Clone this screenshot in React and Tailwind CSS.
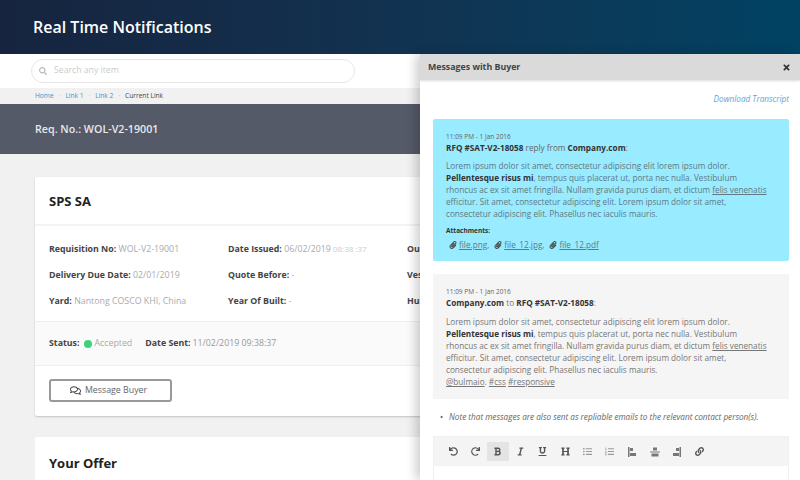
import { FaUndo, FaRedo, FaBold, FaItalic, FaUnderline, FaHeading, FaListUl, FaListOl, FaLink, FaPaperclip, FaSearch, FaTimes, FaRegComments } from 'react-icons/fa';

const font = { fontFamily: '"Open Sans", sans-serif' };

function Crumbs() {
  return (
    <div className="h-4 bg-[#f1f1f1] pl-[35px] flex items-center gap-[5px] text-[6.6px] text-[#3b95d3]">
      <span>Home</span><span className="text-[#bbb]">·</span>
      <span>Link 1</span><span className="text-[#bbb]">·</span>
      <span>Link 2</span><span className="text-[#bbb]">·</span>
      <span className="text-[#444]">Current Link</span>
    </div>
  );
}

function Field({ label, value, extra }) {
  return (
    <div className="whitespace-nowrap text-[8.8px] leading-[26px]">
      <span className="font-bold text-[#444]">{label}</span>{' '}
      <span className="text-[#aaa]">{value}</span>
      {extra && <span className="text-[8px] text-[#ccc]"> {extra}</span>}
    </div>
  );
}

function SummaryCard() {
  return (
    <div className="bg-white w-[730px] shadow-[0_1px_2px_rgba(0,0,0,0.2)] rounded-[2px]">
      <div className="h-[49px] px-[14px] pt-[2px] flex items-center border-b-2 border-[#f3f3f3] text-[13px] font-bold text-[#222]">SPS SA</div>
      <div className="px-[14px] pt-[10px] pb-[7px] grid grid-cols-[179px_179px_1fr] border-b border-[#eee]">
        <Field label="Requisition No:" value="WOL-V2-19001" />
        <Field label="Date Issued:" value="06/02/2019" extra="08:38 :37" />
        <Field label="Outfitter:" value="-" />
        <Field label="Delivery Due Date:" value="02/01/2019" />
        <Field label="Quote Before:" value="-" />
        <Field label="Vessel:" value="-" />
        <Field label="Yard:" value="Nantong COSCO KHI, China" />
        <Field label="Year Of Built:" value="-" />
        <Field label="Hull No:" value="-" />
      </div>
      <div className="h-[44px] px-[14px] pt-[1px] bg-[#fafafa] border-b border-[#eee] flex items-center text-[8.8px] whitespace-nowrap">
        <span className="font-bold text-[#444]">Status:</span>
        <span className="ml-[5px] w-2 h-2 rounded-full bg-[#3ed27d]" />
        <span className="ml-[2px] text-[#aaa]">Accepted</span>
        <span className="ml-[13px] font-bold text-[#444]">Date Sent:</span>
        <span className="ml-[2px] text-[#999]">11/02/2019 09:38:37</span>
      </div>
      <div className="h-[50px] px-[14px] flex items-center">
        <button className="w-[123px] h-[23px] -mt-[2px] pr-[4px] border-2 border-[#999] rounded-[3px] flex items-center justify-center gap-[4px] text-[8.8px] text-[#666]">
          <FaRegComments className="text-[11px] text-[#444]" />
          <span className="pt-[2px]">Message Buyer</span>
        </button>
      </div>
    </div>
  );
}

function AlignIcon({ kind }) {
  return (
    <svg width="10" height="10" viewBox="0 0 10 10" fill="#777">
      {kind === 'left' && <><rect x="1" y="0" width="1.5" height="10" /><rect x="3" y="1" width="3" height="3" /><rect x="3" y="6" width="6" height="3" /></>}
      {kind === 'center' && <><rect x="0" y="4.5" width="10" height="1" /><rect x="3" y="0.5" width="4" height="3" /><rect x="1.5" y="6.5" width="7" height="3" /></>}
      {kind === 'right' && <><rect x="7.5" y="0" width="1.5" height="10" /><rect x="4" y="1" width="3" height="3" /><rect x="1" y="6" width="6" height="3" /></>}
    </svg>
  );
}

function Toolbar() {
  const items = [
    <FaUndo />, <FaRedo />, <FaBold />, <FaItalic />, <FaUnderline />, <FaHeading />,
    <FaListUl className="text-[#999]" />, <FaListOl className="text-[#999]" />,
    <AlignIcon kind="left" />, <AlignIcon kind="center" />, <AlignIcon kind="right" />, <FaLink />,
  ];
  return (
    <div className="h-[29px] bg-[#f4f4f4] px-[8px] flex items-center">
      {items.map((icon, i) => (
        <span key={i} className={`w-[22.4px] h-[19px] flex items-center justify-center text-[9px] text-[#555] ${i === 2 ? 'bg-[#e4e4e4]' : ''}`}>
          {icon}
        </span>
      ))}
    </div>
  );
}

function Lorem() {
  return (
    <>
      Lorem ipsum dolor sit amet, consectetur adipiscing elit lorem ipsum dolor.<br />
      <b className="text-[#333]">Pellentesque risus mi</b>, tempus quis placerat ut, porta nec nulla. Vestibulum<br />
      rhoncus ac ex sit amet fringilla. Nullam gravida purus diam, et dictum <u>felis venenatis</u><br />
      efficitur. Sit amet, consectetur adipiscing elit. Lorem ipsum dolor sit amet,<br />
      consectetur adipiscing elit. Phasellus nec iaculis mauris.
    </>
  );
}

function Attachment({ name }) {
  return (
    <span className="flex items-center gap-[2px]">
      <FaPaperclip className="text-[8px] text-[#444]" />
      <u>{name}</u>
    </span>
  );
}

function Panel() {
  return (
    <aside className="absolute top-[54px] right-0 bottom-0 w-[380px] bg-white shadow-[-4px_0_10px_rgba(0,0,0,0.2)] overflow-hidden">
      <div className="h-[26px] bg-[#dadada] pl-[8px] pr-[9px] pt-[1px] flex items-center justify-between text-[8.8px] font-bold text-[#444] shadow-[0_1px_2px_rgba(0,0,0,0.15)]">
        Messages with Buyer
        <FaTimes className="text-[9px] text-[#333]" />
      </div>
      <div className="px-[13px] pr-[11px]">
        <div className="h-[39px] flex items-center justify-end text-[8.2px] italic text-[#5aa6da]">Download Transcript</div>

        <div className="bg-[#99ebff] rounded-[2px] h-[142px] pt-[13px] px-[13px] text-[8.2px] leading-[12px] text-[#5e7a84] whitespace-nowrap">
          <div className="text-[6.5px] leading-[10px] text-[#666]">11:09 PM - 1 Jan 2016</div>
          <div className="text-[#666]"><b className="text-[#333]">RFQ #SAT-V2-18058</b> reply from <b className="text-[#333]">Company.com</b>:</div>
          <div className="mt-[6px]"><Lorem /></div>
          <div className="mt-[6px] text-[6.5px] leading-[10px] font-bold text-[#333]">Attachments:</div>
          <div className="mt-[2px] pl-[3px] flex items-center gap-[5px] leading-[13px]">
            <Attachment name="file.png" />
            <span className="-ml-[5px]">,</span>
            <Attachment name="file_12.jpg" />
            <span className="-ml-[5px]">,</span>
            <Attachment name="file_12.pdf" />
          </div>
        </div>

        <div className="mt-[13px] bg-[#f5f5f5] h-[125px] pt-[13px] px-[13px] text-[8.2px] leading-[12px] text-[#777] whitespace-nowrap">
          <div className="text-[6.5px] leading-[10px] text-[#666]">11:09 PM - 1 Jan 2016</div>
          <div><b className="text-[#333]">Company.com</b> to <b className="text-[#333]">RFQ #SAT-V2-18058</b>:</div>
          <div className="mt-[7px]"><Lorem /></div>
          <div><u>@bulmaio</u>. <u>#css</u> <u>#responsive</u></div>
        </div>

        <div className="h-[37px] pl-[7px] flex items-center gap-[6px] text-[8.2px] italic text-[#666] whitespace-nowrap">
          <span className="not-italic text-[#555]">•</span>
          Note that messages are also sent as repliable emails to the relevant contact person(s).
        </div>

        <div className="border border-[#f0f0f0]">
          <Toolbar />
          <div className="h-[40px] bg-white" />
        </div>
      </div>
    </aside>
  );
}

export default function App() {
  return (
    <div style={font} className="relative w-[800px] h-[480px] overflow-hidden bg-[#f1f1f1]">
      <header className="h-[54px] bg-gradient-to-r from-[#16243f] to-[#004263] pl-[33px] flex items-center text-[16px] font-semibold text-white">
        Real Time Notifications
      </header>
      <div className="h-[34px] bg-white pl-[31px] flex items-center">
        <div className="w-[324px] h-[24px] border border-[#e6e6e6] rounded-full flex items-center pl-[7px] gap-[7px] text-[8.7px] text-[#ccc]">
          <FaSearch className="text-[8px] text-[#bbb]" />
          Search any item
        </div>
      </div>
      <Crumbs />
      <div className="h-[50px] bg-[#555a68] pl-[35px] flex items-center text-[10.7px] font-semibold text-[#e8e8ea]">
        Req. No.: WOL-V2-19001
      </div>
      <main className="pt-[23px] pl-[35px] flex flex-col gap-[21px]">
        <SummaryCard />
        <div className="bg-white w-[730px] h-[60px] rounded-[2px] px-[14px] pt-[17px] text-[13px] font-bold text-[#222]">Your Offer</div>
      </main>
      <Panel />
    </div>
  );
}
